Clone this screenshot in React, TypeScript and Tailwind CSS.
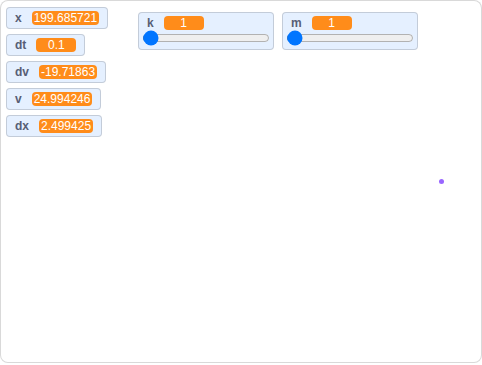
import React from "react";

type Mon = { label: string; value: string; x: number; y: number };

const monitors: Mon[] = [
  { label: "x", value: "199.685721", x: 5, y: 6 },
  { label: "dt", value: "0.1", x: 5, y: 33 },
  { label: "dv", value: "-19.71863", x: 5, y: 60 },
  { label: "v", value: "24.994246", x: 5, y: 87 },
  { label: "dx", value: "2.499425", x: 5, y: 114 },
];

const sliders: Mon[] = [
  { label: "k", value: "1", x: 137, y: 11 },
  { label: "m", value: "1", x: 281, y: 11 },
];

function Row({ label, value }: { label: string; value: string }) {
  return (
    <div className="flex leading-[14px]">
      <span className="mx-[5px] font-bold text-[#575e75]">{label}</span>
      <span className="mx-[5px] min-w-[40px] rounded px-[2px] text-center text-white bg-[#ff8c1a]">
        {value}
      </span>
    </div>
  );
}

export default function App() {
  return (
    <div className="relative h-[363px] w-[482px] overflow-hidden rounded-lg border border-black/15 bg-white font-['Liberation_Sans',Arial,sans-serif] text-xs">
      {monitors.map((m) => (
        <div
          key={m.label}
          className="absolute rounded border border-black/15 bg-[#e5f0ff] p-[3px]"
          style={{ left: m.x, top: m.y }}
        >
          <Row label={m.label} value={m.value} />
        </div>
      ))}
      {sliders.map((m) => (
        <div
          key={m.label}
          className="absolute flex w-[136px] flex-col rounded border border-black/15 bg-[#e5f0ff] p-[3px]"
          style={{ left: m.x, top: m.y }}
        >
          <Row label={m.label} value={m.value} />
          <input type="range" min={0} max={100} defaultValue={1} className="w-full" />
        </div>
      ))}
      {/* sprite */}
      <div className="absolute left-[438px] top-[178px] h-[5px] w-[5px] rounded-full bg-[#9966ff]" />
    </div>
  );
}
